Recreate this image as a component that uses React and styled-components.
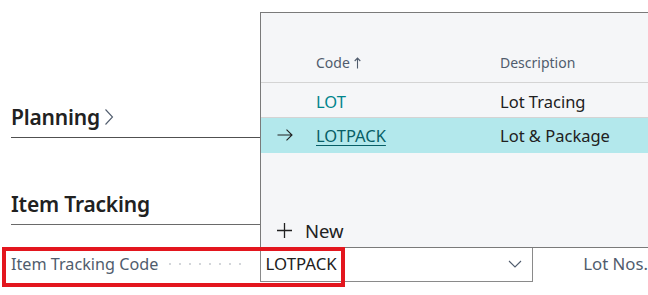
import React from 'react'
import styled, { createGlobalStyle } from 'styled-components'

const GlobalStyle = createGlobalStyle`
  html, body {
    margin: 0;
    padding: 0;
    background: #ffffff;
  }
  body {
    font-family: "Noto Sans", "Open Sans", sans-serif;
    color: #212121;
  }
`

const Page = styled.div`
  position: relative;
  width: 648px;
  height: 295px;
  overflow: hidden;
  padding-left: 11px;
  box-sizing: border-box;
`

const SectionHeader = styled.div`
  display: flex;
  align-items: center;
  gap: 4px;
  box-sizing: border-box;
  width: 249px;
  height: 36px;
  padding-bottom: 6px;
  margin-top: ${p => p.$top}px;
  border-bottom: 1px solid ${p => p.$line};
  font-size: 21px;
  font-weight: 600;
  color: #212121;
  letter-spacing: -0.2px;
`

const FieldRow = styled.div`
  display: flex;
  align-items: center;
  height: 37px;
  margin-top: 20px;
`

const LabelCell = styled.div`
  display: flex;
  align-items: center;
  width: 249px;
  font-size: 16.2px;
  color: #505c6d;
`

const Dots = styled.span`
  display: flex;
  gap: 8px;
  margin-left: 11px;

  i {
    width: 2px;
    height: 2px;
    border-radius: 1px;
    background: #c4c8ce;
  }
`

const Input = styled.div`
  display: flex;
  align-items: center;
  justify-content: space-between;
  box-sizing: border-box;
  width: 274px;
  height: 37px;
  padding: 0 10px 0 5px;
  border: 1px solid #8a8a8a;
  font-size: 16.8px;
  color: #212121;
`

const SideLabel = styled.div`
  margin-left: 50px;
  font-size: 16.8px;
  color: #505c6d;
  white-space: nowrap;
`

const Highlight = styled.div`
  position: absolute;
  left: 2px;
  top: 247px;
  width: 343px;
  height: 40px;
  box-sizing: border-box;
  border: 4px solid #e3161e;
  pointer-events: none;
`

const Panel = styled.div`
  position: absolute;
  left: 260px;
  top: 12px;
  width: 420px;
  height: 236px;
  box-sizing: border-box;
  display: flex;
  flex-direction: column;
  background: #f5f6f8;
  border-top: 1px solid #7a7a7a;
  border-left: 1px solid #7a7a7a;
  border-bottom: 1px solid #7a7a7a;
  padding-top: 34px;
`

const GridRow = styled.div`
  display: grid;
  grid-template-columns: 55px 184px 1fr;
  align-items: center;
  box-sizing: border-box;
  height: ${p => p.$h}px;
  padding-bottom: ${p => p.$lift || 0}px;
  padding-top: ${p => p.$drop || 0}px;
  background: ${p => (p.$selected ? '#b3e8ec' : 'transparent')};
  border-bottom: 1px solid ${p => (p.$line ? '#d4d4d4' : 'transparent')};
`

const HeadCell = styled.div`
  font-size: 14px;
  color: #505c6d;
  display: flex;
  align-items: center;
  gap: 4px;
`

const CodeCell = styled.div`
  font-size: 16.5px;
  color: ${p => (p.$selected ? '#075e66' : '#00858c')};
  text-decoration: ${p => (p.$selected ? 'underline' : 'none')};
  text-underline-offset: 3px;
  text-decoration-thickness: 1px;
`

const DescCell = styled.div`
  font-size: 16.5px;
  color: #212121;
`

const ArrowCell = styled.div`
  padding-left: 16px;
  display: flex;
  align-items: center;
`

const Footer = styled.div`
  margin-top: auto;
  display: flex;
  align-items: center;
  gap: 13px;
  height: 34px;
  padding-left: 16px;
  font-size: 18.5px;
  color: #212121;
`

const Chevron = ({ dir = 'right', size = 12, color = '#505c6d' }) =>
  dir === 'right' ? (
    <svg width="10" height="18" viewBox="0 0 10 18" fill="none">
      <path d="M1.5 1.5 L8.5 9 L1.5 16.5" stroke={color} strokeWidth="1.1" />
    </svg>
  ) : (
    <svg width={size + 2} height="8" viewBox="0 0 14 8" fill="none">
      <path d="M1 1 L7 7 L13 1" stroke={color} strokeWidth="1.1" />
    </svg>
  )

const RowArrow = () => (
  <svg width="16" height="12" viewBox="0 0 16 12" fill="none">
    <path d="M0.5 6 H15 M9.5 0.7 L15 6 L9.5 11.3" stroke="#212121" strokeWidth="1.1" />
  </svg>
)

const SortUp = () => (
  <svg width="7" height="12" viewBox="0 0 7 12" fill="none">
    <path d="M3.5 11.5 V1.2 M0.7 4 L3.5 1 L6.3 4" stroke="#505c6d" strokeWidth="1.1" />
  </svg>
)

const Plus = () => (
  <svg width="15" height="15" viewBox="0 0 15 15" fill="none">
    <path d="M7.5 0 V15 M0 7.5 H15" stroke="#212121" strokeWidth="1.3" />
  </svg>
)

const rows = [
  { code: 'LOT', desc: 'Lot Tracing' },
  { code: 'LOTPACK', desc: 'Lot & Package', selected: true },
]

export default function App() {
  return (
    <>
      <GlobalStyle />
      <Page>
        <SectionHeader $top={102} $line="#505050">
          Planning <Chevron />
        </SectionHeader>
        <SectionHeader $top={51} $line="#6a6a6a">
          Item Tracking
        </SectionHeader>
        <FieldRow>
          <LabelCell>
            Item Tracking Code
            <Dots>
              {Array.from({ length: 8 }).map((_, i) => (
                <i key={i} />
              ))}
            </Dots>
          </LabelCell>
          <Input>
            LOTPACK
            <Chevron dir="down" />
          </Input>
          <SideLabel>Lot Nos.</SideLabel>
        </FieldRow>

        <Panel>
          <GridRow $h={36} $lift={4} $line>
            <div />
            <HeadCell>
              Code <SortUp />
            </HeadCell>
            <HeadCell>Description</HeadCell>
          </GridRow>
          {rows.map(r => (
            <GridRow
              key={r.code}
              $h={35}
              $drop={r.selected ? 0 : 2}
              $selected={r.selected}
              $line={!r.selected}
            >
              <ArrowCell>{r.selected && <RowArrow />}</ArrowCell>
              <CodeCell $selected={r.selected}>{r.code}</CodeCell>
              <DescCell>{r.desc}</DescCell>
            </GridRow>
          ))}
          <Footer>
            <Plus />
            New
          </Footer>
        </Panel>

        <Highlight />
      </Page>
    </>
  )
}
